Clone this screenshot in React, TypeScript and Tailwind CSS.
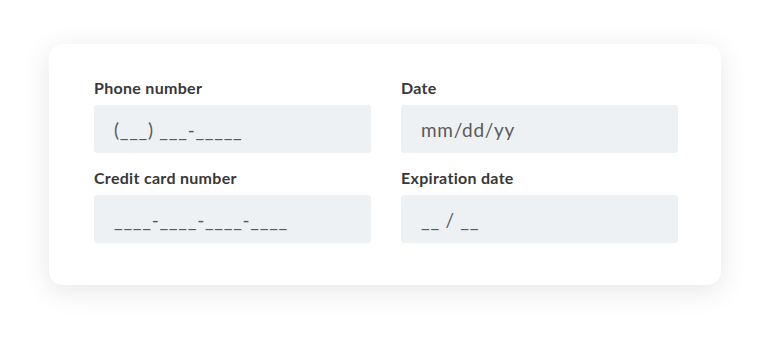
export default function App() {
	const fields = [
		{ label: "Phone number", placeholder: "(___) ___-_____" },
		{ label: "Date", placeholder: "mm/dd/yy" },
		{ label: "Credit card number", placeholder: "____-____-____-____" },
		{ label: "Expiration date", placeholder: "__ / __" },
	];

	return (
		<div className="min-h-screen bg-white flex justify-center pt-[44px] font-['Lato',_sans-serif]">
			<div className="w-[672px] h-[241px] rounded-[14px] bg-white pl-[45px] pr-[43px] pt-[34px] shadow-[0_6px_28px_rgba(0,0,0,0.1)]">
				<div className="grid grid-cols-2 gap-x-[30px] gap-y-[15px]">
					{fields.map((f) => (
						<label key={f.label} className="flex flex-col gap-[7px]">
							<span className="text-[16px] leading-[20px] font-bold tracking-[0.3px] text-[#383838]">
								{f.label}
							</span>
							<input
								type="text"
								placeholder={f.placeholder}
								className="h-[48px] w-full rounded-[3px] bg-[#eef1f4] px-[20px] text-[19px] font-normal tracking-[0.7px] text-[#555] placeholder:text-[#5a5a5a] outline-none"
							/>
						</label>
					))}
				</div>
			</div>
		</div>
	);
}
